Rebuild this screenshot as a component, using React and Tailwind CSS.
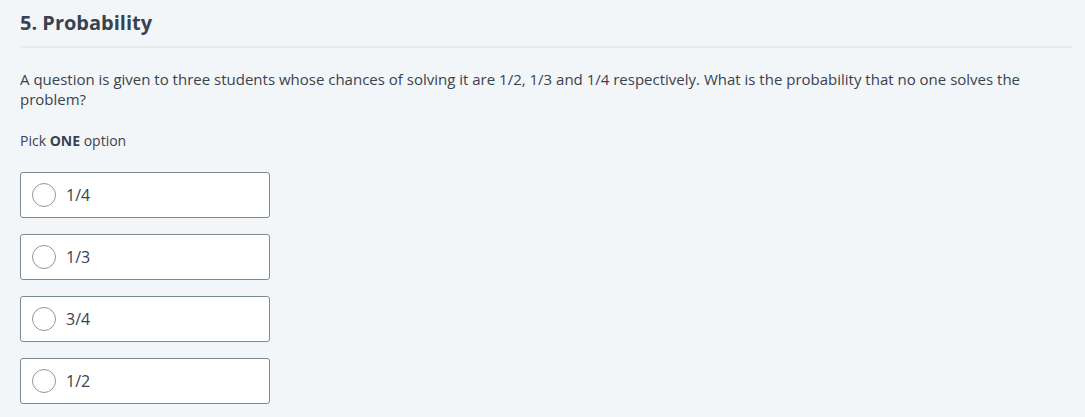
const options = ["1/4", "1/3", "3/4", "1/2"];

export default function App() {
  return (
    <div className="min-h-screen bg-[#f3f6f8] pl-5 pr-[13px] font-['Open_Sans',sans-serif] text-[#39424e]">
      {/* Title */}
      <div className="border-b-2 border-[#e7ebee] pt-[9px] pb-[9px]">
        <h2 className="text-[20px] font-bold leading-[28px]">5. Probability</h2>
      </div>

      {/* Question */}
      <p className="mt-[21px] text-[15px] leading-[20px] pr-[40px]">
        A question is given to three students whose chances of solving it are 1/2, 1/3 and 1/4 respectively. What is the probability that no one solves the problem?
      </p>

      <p className="mt-[22px] text-[14px] leading-[20px]">
        Pick <span className="font-bold">ONE</span> option
      </p>

      {/* Options */}
      <div className="mt-[21px] flex flex-col gap-4">
        {options.map((opt) => (
          <label
            key={opt}
            className="flex h-[46px] w-[250px] cursor-pointer items-center rounded-[3px] border border-[#7c8b92] bg-white pl-[11px]"
          >
            <span className="h-6 w-6 rounded-full border border-[#8a989e] bg-white" />
            <span className="ml-[10px] text-[16px] text-[#39424e]">{opt}</span>
          </label>
        ))}
      </div>
    </div>
  );
}
